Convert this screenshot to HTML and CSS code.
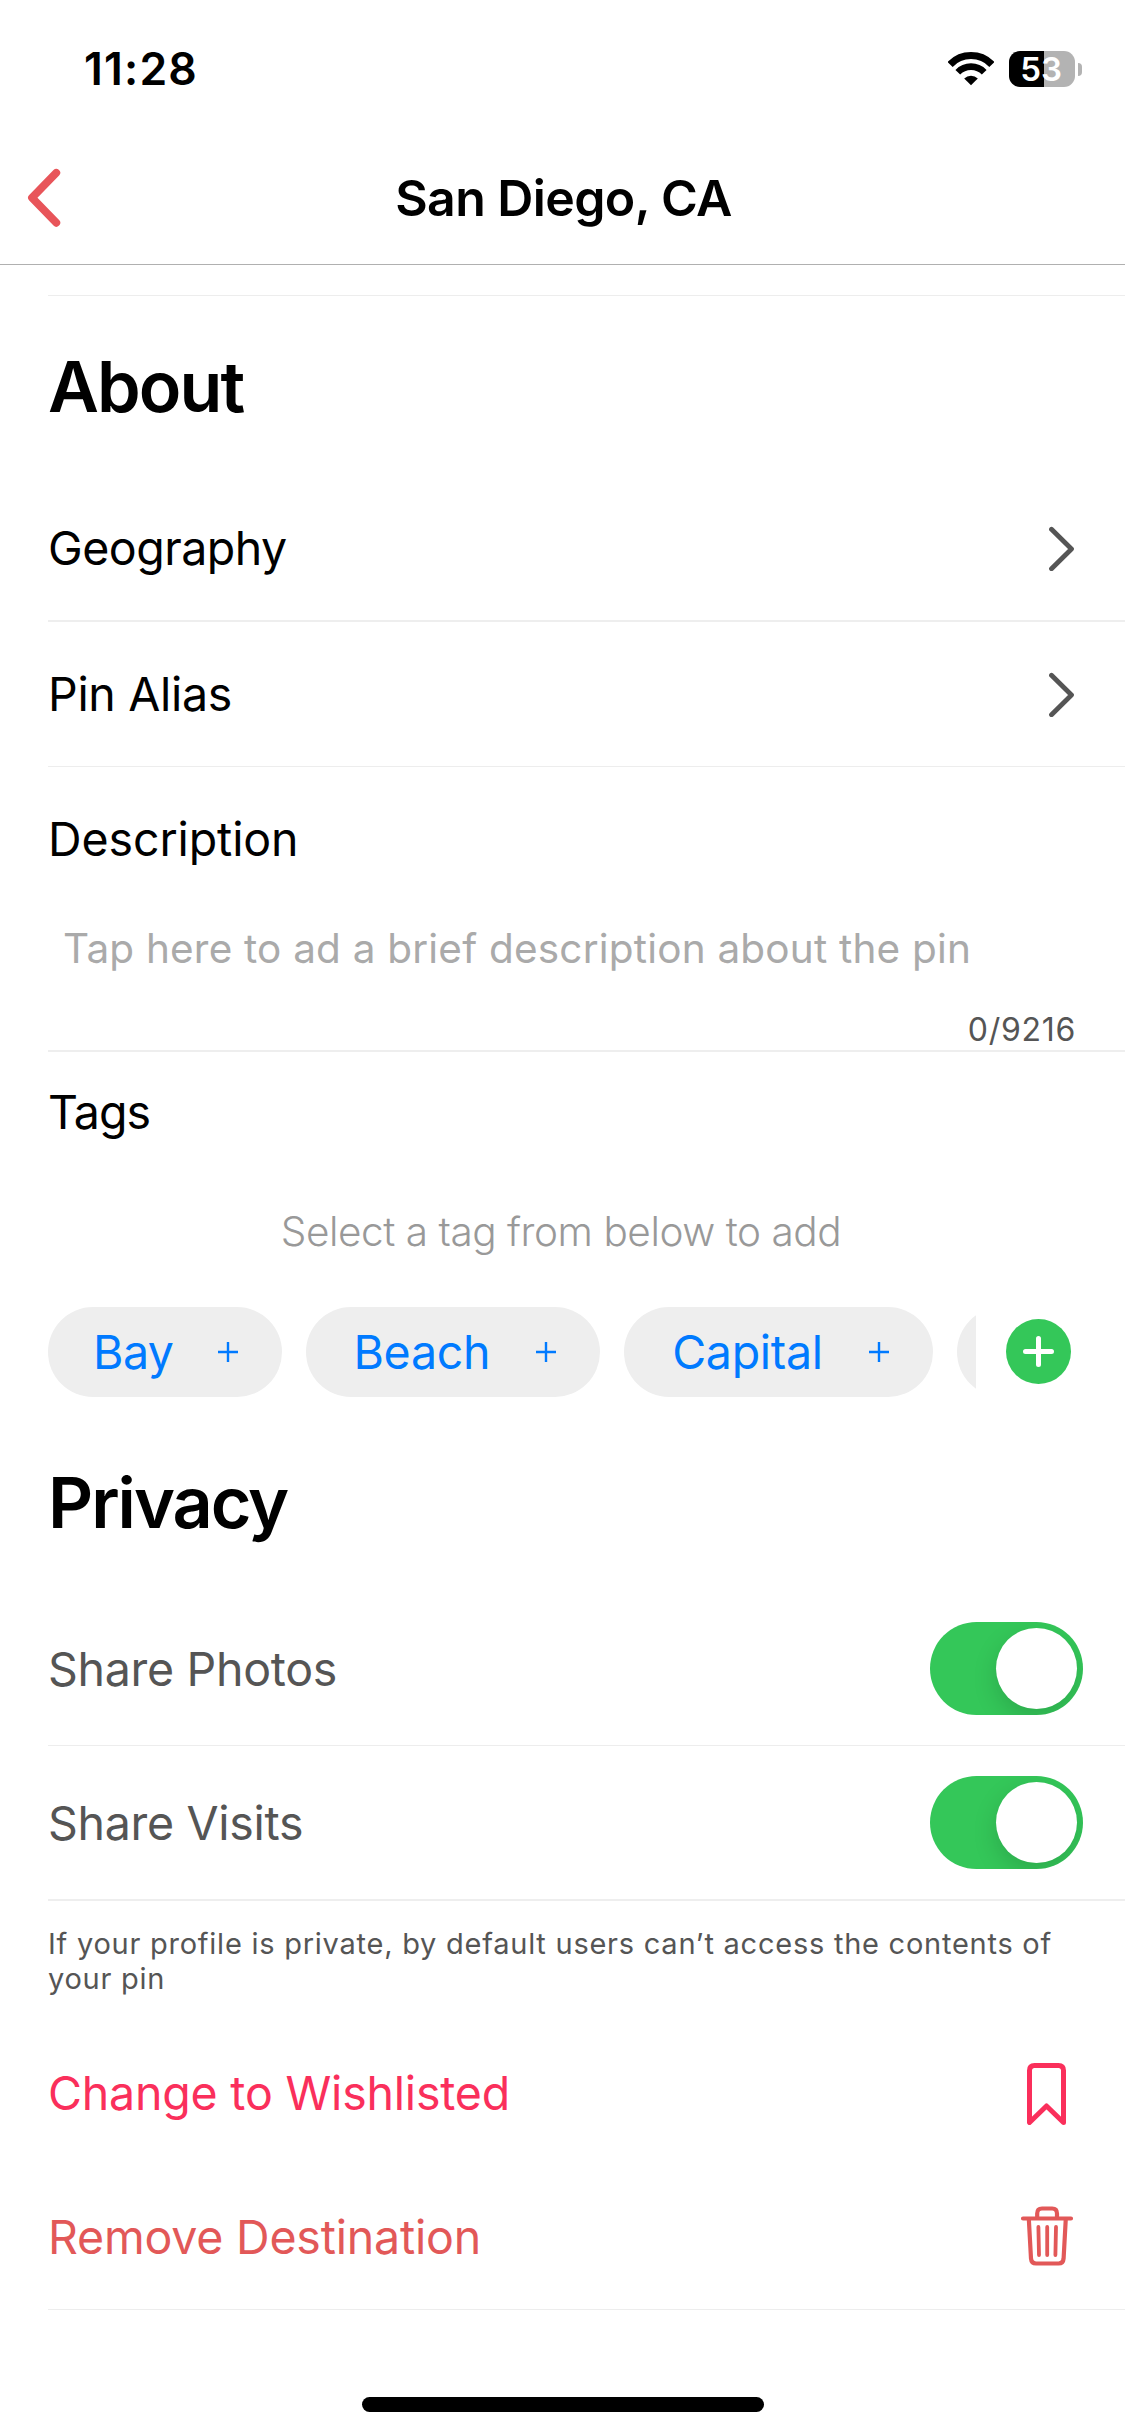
FILE: index.html
```
<!DOCTYPE html>
<html lang="en">
<head>
  <meta charset="UTF-8" />
  <meta name="viewport" content="width=device-width, initial-scale=1" />
  <title>San Diego, CA</title>
  <link rel="stylesheet" href="styles.css">
</head>
<body>
  <div class="status-bar">
    <div class="time">11:28</div>
    <div class="status-icons">
      <svg class="wifi" width="46" height="36" viewBox="0 0 46 36">
        <path d="M2.1 13.4 A29 29 0 0 1 43.9 13.4" fill="none" stroke="#000" stroke-width="7.2" />
        <path d="M9.8 21.2 A18.4 18.4 0 0 1 36.2 21.2" fill="none" stroke="#000" stroke-width="6.6" />
        <path d="M16.2 27.4 A10 10 0 0 1 29.8 27.4 L23 34.2 Z" fill="#000" />
      </svg>
      <div class="battery">53</div>
      <div class="battery-cap"></div>
    </div>
  </div>

  <header class="nav">
    <svg class="back" width="36" height="60" viewBox="0 0 36 60">
      <path d="M30.3 4.8 L6 29.8 L30.3 54.8" />
    </svg>
    <h1>San Diego, CA</h1>
  </header>

  <main>
    <div class="strip"></div>
    <h2>About</h2>
    <div class="row geography line-thick">
      <span>Geography</span>
      <svg class="chevron" width="26" height="46" viewBox="0 0 26 46">
        <path d="M2.5 4.3 L22.5 24 L2.5 43.7" />
      </svg>
    </div>
    <div class="row line">
      <span>Pin Alias</span>
      <svg class="chevron" width="26" height="46" viewBox="0 0 26 46">
        <path d="M2.5 4.3 L22.5 24 L2.5 43.7" />
      </svg>
    </div>

    <div class="description line-thick">
      <div class="row">Description</div>
      <div class="placeholder">Tap here to ad a brief description about the pin</div>
      <div class="counter">0/9216</div>
    </div>

    <div class="tags-title">Tags</div>
    <div class="tags-hint">Select a tag from below to add</div>
    <div class="tags">
      <div class="tag-list">
        <div class="tag">Bay <svg width="20" height="20" viewBox="0 0 20 20"><path d="M10 0 V20 M0 10 H20" /></svg></div>
        <div class="tag wide">Beach <svg width="20" height="20" viewBox="0 0 20 20"><path d="M10 0 V20 M0 10 H20" /></svg></div>
        <div class="tag wide">Capital <svg width="20" height="20" viewBox="0 0 20 20"><path d="M10 0 V20 M0 10 H20" /></svg></div>
        <div class="tag"></div>
      </div>
      <svg class="add-tag" width="65" height="65" viewBox="0 0 65 65">
        <circle cx="32.5" cy="32.5" r="32.5" />
        <path d="M32.5 19.5 V45.5 M19.5 32.5 H45.5" />
      </svg>
    </div>

    <h2 class="privacy">Privacy</h2>
    <div class="row share line">
      <span>Share Photos</span>
      <div class="toggle"><div class="knob"></div></div>
    </div>
    <div class="row share line-thick">
      <span>Share Visits</span>
      <div class="toggle"><div class="knob"></div></div>
    </div>
    <p class="note">If your profile is private, by default users can’t access the contents of<br />your pin</p>

    <div class="row wishlist">
      <span>Change to Wishlisted</span>
      <svg width="40" height="64" viewBox="0 0 40 64">
        <path d="M2.5 61.5 V9.5 Q2.5 4.5 7.5 4.5 H31.5 Q36.5 4.5 36.5 9.5 V61.5 L19.5 45 Z" />
      </svg>
    </div>
    <div class="row remove line">
      <span>Remove Destination</span>
      <svg width="54" height="62" viewBox="0 0 54 62">
        <path d="M3 12.5 H51 M17.2 12.5 V7.5 Q17.2 2.5 22 2.5 H32.2 Q37 2.5 37 7.5 V12.5 M8.8 12.5 L11 52.5 Q11.4 57.5 16 57.5 H38.6 Q43.2 57.5 43.6 52.5 L45.8 12.5" />
        <path class="ribs" d="M18.4 21 L19 49 M27.2 21 V49 M36 21 L35.4 49" />
      </svg>
    </div>
  </main>

  <div class="home-bar"></div>
</body>
</html>
```
FILE: styles.css
```
* { box-sizing: border-box; }
body {
  margin: 0;
  width: 1125px;
  height: 2436px;
  background: #fff;
  color: #000;
  font-family: Inter, "Liberation Sans", sans-serif;
  font-size: 46.5px;
  letter-spacing: -0.3px;
  display: flex;
  flex-direction: column;
}
svg {
  display: block;
  flex-shrink: 0;
  fill: none;
  stroke-linecap: round;
  stroke-linejoin: round;
}

/* status bar */
.status-bar {
  height: 132px;
  padding: 6px 43px 0 84px;
  display: flex;
  justify-content: space-between;
  align-items: center;
}
.time {
  font-size: 44.5px;
  font-weight: 600;
  letter-spacing: 1.2px;
}
.status-icons {
  display: flex;
  align-items: center;
}
.wifi {
  stroke-linecap: butt;
}
.battery {
  width: 66px;
  height: 36px;
  margin-left: 15px;
  padding-right: 2px;
  border-radius: 11px;
  background: linear-gradient(to right, #000 35px, #b3b3b3 35px);
  color: #fff;
  font-size: 33px;
  font-weight: 600;
  line-height: 36px;
  letter-spacing: 0;
  text-align: center;
}
.battery-cap {
  width: 4px;
  height: 13px;
  margin-left: 3px;
  border-radius: 0 4px 4px 0;
  background: #b3b3b3;
}

/* navigation */
.nav {
  height: 133px;
  border-bottom: 1px solid #b0b0b0;
  display: grid;
  grid-template-columns: 62px 1fr 62px;
  align-items: center;
}
.back {
  margin-left: 26px;
  stroke: #e8555a;
  stroke-width: 7.8px;
}
h1 {
  margin: 0;
  padding-left: 2px;
  font-size: 50px;
  font-weight: 600;
  letter-spacing: -0.6px;
  text-align: center;
}

/* sections */
main {
  padding-left: 48px;
  flex: 1;
}
.strip {
  height: 31px;
  border-bottom: 1px solid #ededed;
}
h2 {
  margin: 0;
  padding-top: 1px;
  height: 180px;
  font-size: 70px;
  font-weight: 600;
  letter-spacing: -1.9px;
  line-height: 180px;
}
.row {
  height: 144px;
  padding-right: 50px;
  display: flex;
  justify-content: space-between;
  align-items: center;
}
.line {
  height: 145px;
  border-bottom: 1px solid #ededed;
}
.line-thick {
  height: 146px;
  border-bottom: 2px solid #eee;
}
.geography {
  letter-spacing: -0.5px;
}
.chevron {
  stroke: #555;
  stroke-width: 4.8px;
}

/* description */
.description {
  height: 285px;
}
.description .row {
  letter-spacing: -0.1px;
}
.placeholder {
  padding-left: 15px;
  font-size: 40.5px;
  line-height: 75px;
  letter-spacing: 0.2px;
  color: #aaa;
}
.counter {
  padding: 23px 49px 0 0;
  font-size: 32px;
  line-height: 42px;
  letter-spacing: 0.7px;
  text-align: right;
  color: #555;
}

/* tags */
.tags-title {
  line-height: 120px;
  letter-spacing: -0.9px;
}
.tags-hint {
  padding-right: 51px;
  font-size: 40.5px;
  font-weight: 300;
  line-height: 119px;
  letter-spacing: -0.45px;
  text-align: center;
  color: #999;
}
.tags {
  margin-top: 16px;
  height: 90px;
  display: flex;
  align-items: center;
}
.tag-list {
  width: 928px;
  display: flex;
  gap: 24px;
  overflow: hidden;
}
.tag {
  height: 90px;
  padding: 0 44px 0 45px;
  border-radius: 45px;
  background: #eee;
  color: #007aff;
  letter-spacing: -0.5px;
  display: flex;
  align-items: center;
  gap: 44px;
  flex-shrink: 0;
}
.tag:last-child {
  width: 240px;
}
.tag.wide {
  padding: 0 44px 0 48px;
  letter-spacing: -0.3px;
  gap: 46px;
}
.tag svg {
  stroke: #007aff;
  stroke-width: 2.4px;
  stroke-linecap: butt;
}
.add-tag {
  margin: 0 0 1px 30px;
}
.add-tag circle {
  fill: #34c759;
}
.add-tag path {
  stroke: #fff;
  stroke-width: 5px;
}

/* privacy */
.privacy {
  height: 179px;
  margin-top: 16px;
  padding-top: 0;
  letter-spacing: -2px;
  line-height: 179px;
}
.share {
  height: 154px;
  padding-right: 42px;
  color: #555;
}
.share.line-thick {
  height: 155px;
}
.toggle {
  width: 153px;
  height: 93px;
  padding: 6px;
  border-radius: 47px;
  background: #34c759;
  display: flex;
  justify-content: flex-end;
  overflow: hidden;
}
.knob {
  width: 81px;
  height: 81px;
  border-radius: 50%;
  background: #fff;
  box-shadow: 0 9px 24px rgba(0, 0, 0, 0.15);
}
.note {
  margin: 0;
  padding: 25px 0;
  font-size: 29px;
  line-height: 35px;
  letter-spacing: 0.75px;
  color: #555;
}

/* actions */
.wishlist {
  padding-right: 58px;
  letter-spacing: -0.2px;
  color: #fa2f5b;
}
.wishlist svg {
  stroke: #fa2f5b;
  stroke-width: 5px;
}
.remove {
  padding-right: 51px;
  letter-spacing: -0.2px;
  color: #e25858;
}
.remove svg {
  stroke: #e25858;
  stroke-width: 4.2px;
}
.remove .ribs {
  stroke-width: 3.8px;
}

.home-bar {
  width: 402px;
  height: 15px;
  margin: 0 auto 24px;
  border-radius: 8px;
  background: #000;
}
```
